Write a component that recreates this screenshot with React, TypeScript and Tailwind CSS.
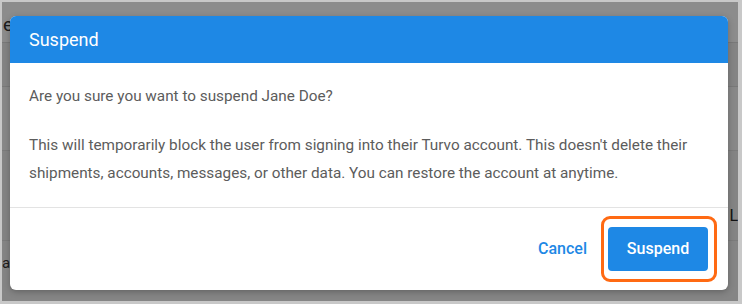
import React from 'react';

const font = { fontFamily: 'Roboto, "Liberation Sans", sans-serif' };

export default function App() {
  return (
    <div
      className="w-[742px] h-[304px] border-t-2 border-l-2 border-r-4 border-b-[3px] border-[#c8c8c8] overflow-hidden"
      style={font}
    >
      <div className="relative w-full h-full bg-white overflow-hidden">
        {/* Page behind the dialog */}
        <div className="flex flex-col h-full">
          <div className="h-[41px] bg-white border-b border-[#dcdcdc] flex items-center pl-[1px] pt-[6px]">
            <span className="text-[19px] text-[#333]">email</span>
          </div>
          <div className="h-[44px] bg-[#f0f0f0] border-b border-[#dcdcdc]" />
          <div className="h-[64px] bg-[#f7f7f7] border-b border-[#e0e0e0]" />
          <div className="h-[90px] bg-[#f0f0f0] border-b border-[#e0e0e0] flex items-end justify-end pb-[12px]">
            <span className="text-[16px] text-[#222]">L</span>
          </div>
          <div className="flex-1 bg-[#f3f3f3] flex items-start pt-[11px]">
            <span className="text-[15px] text-[#333]">ag</span>
          </div>
        </div>

        {/* Dim overlay */}
        <div className="absolute inset-0 bg-black/45" />

        {/* Dialog */}
        <div className="absolute left-[8px] top-[14px] w-[718px] h-[274px] bg-white rounded-[6px] overflow-hidden flex flex-col shadow-[0_2px_6px_rgba(0,0,0,0.25)]">
          <div className="h-[47px] bg-[#1e88e5] flex items-center px-[19px]">
            <h2 className="text-[18px] text-white font-normal">Suspend</h2>
          </div>

          <div className="px-[19px] pt-[19px] pb-[20px] text-[15.3px] leading-[28px] text-[#5c5c5c] border-b border-[#e3e3e3]">
            <p>Are you sure you want to suspend Jane Doe?</p>
            <p className="mt-[21px]">
              This will temporarily block the user from signing into their Turvo account. This doesn't delete their
              shipments, accounts, messages, or other data. You can restore the account at anytime.
            </p>
          </div>

          <div className="flex-1 flex items-center justify-end pr-[11px]">
            <button className="text-[16px] font-medium text-[#1e88e5] mr-[14px]">Cancel</button>
            <div className="border-[3px] border-[#ff6a13] rounded-[9px] pl-[4px] pr-[6px] py-[8px]">
              <button className="w-[100px] h-[44px] rounded-[4px] bg-[#1e88e5] text-white text-[16px] font-medium">
                Suspend
              </button>
            </div>
          </div>
        </div>
      </div>
    </div>
  );
}
